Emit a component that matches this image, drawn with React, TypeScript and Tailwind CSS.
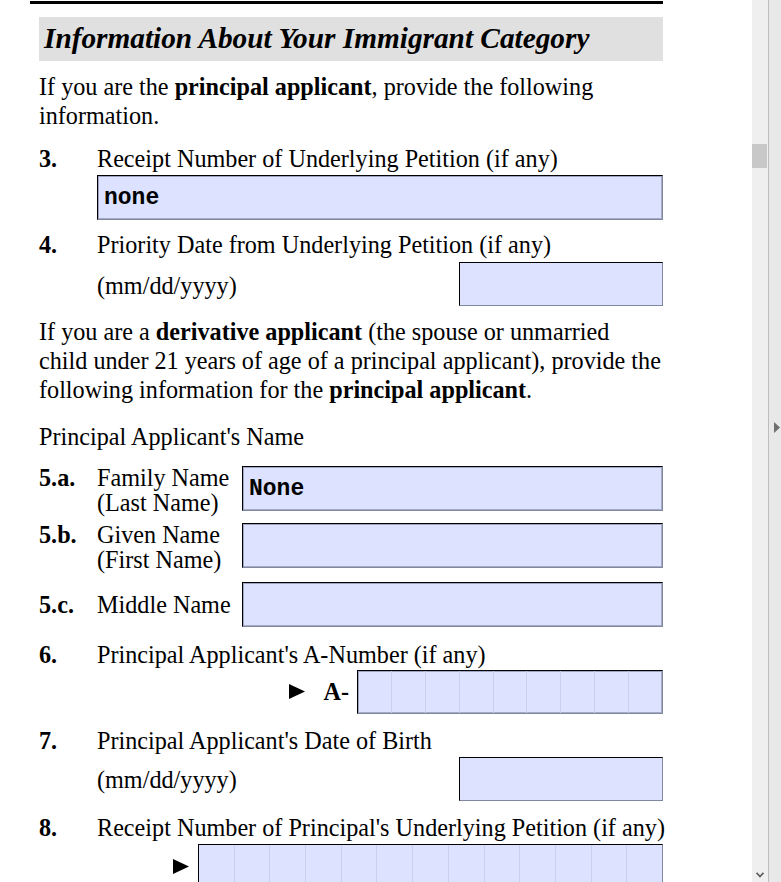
import type { ReactNode } from "react";

const serif = "font-['Liberation_Serif',serif]";
const mono = "font-['Liberation_Mono',monospace]";

// PDF-style text field: bevelled ("inset") or flat, optionally split into comb cells
function Field({
  className = "",
  value,
  inset = false,
  cells = 0,
}: {
  className?: string;
  value?: string;
  inset?: boolean;
  cells?: number;
}) {
  return (
    <div
      className={`flex items-center border border-t-black border-l-black border-r-[#8088a0] border-b-[#8088a0] bg-[#dce2ff] ${
        inset ? "shadow-[inset_1px_1px_0_#9ea4c2,inset_-1px_-1px_0_#a6abc4]" : ""
      } ${className}`}
    >
      {cells > 0 ? (
        <div className="flex h-full w-full">
          {Array.from({ length: cells }).map((_, i) => (
            <div key={i} className={`flex-1 ${i > 0 ? "border-l border-[#c9cfec]" : ""}`} />
          ))}
        </div>
      ) : (
        value && <span className={`${mono} pl-[6px] pt-[2px] text-[23px] font-bold leading-none text-black`}>{value}</span>
      )}
    </div>
  );
}

function Arrow({ className = "" }: { className?: string }) {
  return (
    <svg width="16" height="15" viewBox="0 0 16 15" className={className}>
      <polygon points="0,0 16,7.5 0,15" fill="#000" />
    </svg>
  );
}

function Item({ num, children, className = "" }: { num: string; children: ReactNode; className?: string }) {
  return (
    <div className={`flex leading-[29px] ${className}`}>
      <span className="w-[58px] shrink-0 font-bold">{num}</span>
      <span className="whitespace-nowrap">{children}</span>
    </div>
  );
}

function NameRow({ num, lines, value, className = "" }: { num: string; lines: string[]; value?: string; className?: string }) {
  const single = lines.length === 1;
  return (
    <div className={`flex ${single ? "items-center" : "items-start"} ${className}`}>
      <div className={`flex ${single ? "leading-[29px]" : "leading-[25px] -mt-[1px]"}`}>
        <span className="w-[58px] shrink-0 font-bold">{num}</span>
        <div className="w-[145px] whitespace-nowrap">
          {lines.map((l) => (
            <div key={l}>{l}</div>
          ))}
        </div>
      </div>
      <Field className="h-[45px] flex-1" value={value} inset />
    </div>
  );
}

export default function App() {
  return (
    <div className="flex h-[882px] w-[781px] overflow-hidden bg-white">
      <main className={`w-[752px] shrink-0 ${serif} text-[24.2px] text-black`}>
        <div className="ml-[30px] mt-[1px] h-[3px] w-[633px] bg-black" />

        <div className="ml-[39px] w-[624px]">
          <h1 className="mt-[13px] flex h-[44px] items-center whitespace-nowrap bg-[#e0e0e0] pl-[5px] text-[29.3px] font-bold italic">
            Information About Your Immigrant Category
          </h1>

          <p className="mt-[11px] whitespace-nowrap leading-[29px]">
            If you are the <b>principal applicant</b>, provide the following
            <br />
            information.
          </p>

          <Item num="3." className="mt-[14px]">
            Receipt Number of Underlying Petition (if any)
          </Item>
          <div className="ml-[58px] mt-[2px]">
            <Field className="h-[45px]" value="none" inset />
          </div>

          <Item num="4." className="mt-[10px]">
            Priority Date from Underlying Petition (if any)
          </Item>
          <div className="ml-[58px] mt-[3px] flex items-center justify-between">
            <span className="mt-[3px] leading-[29px]">(mm/dd/yyyy)</span>
            <Field className="h-[44px] w-[204px]" />
          </div>

          <p className="mt-[11px] whitespace-nowrap leading-[29px]">
            If you are a <b>derivative applicant</b> (the spouse or unmarried
            <br />
            child under 21 years of age of a principal applicant), provide the
            <br />
            following information for the <b>principal applicant</b>.
          </p>

          <p className="mt-[18px] leading-[29px]">Principal Applicant's Name</p>

          <NameRow num="5.a." lines={["Family Name", "(Last Name)"]} value="None" className="mt-[15px]" />
          <NameRow num="5.b." lines={["Given Name", "(First Name)"]} className="mt-[8px]" />
          <NameRow num="5.c." lines={["Middle Name"]} className="mt-[10px]" />

          <Item num="6." className="mt-[13px]">
            Principal Applicant's A-Number (if any)
          </Item>
          <div className="mt-[1px] flex items-center justify-end">
            <Arrow className="mr-[18px] -mt-[2px]" />
            <span className="mr-[8px] font-bold">A-</span>
            <Field className="h-[44px] w-[306px]" cells={9} inset />
          </div>

          <Item num="7." className="mt-[12px]">
            Principal Applicant's Date of Birth
          </Item>
          <div className="ml-[58px] mt-[2px] flex items-center justify-between">
            <span className="mt-[1px] leading-[29px]">(mm/dd/yyyy)</span>
            <Field className="h-[44px] w-[204px]" />
          </div>

          <Item num="8." className="mt-[12px]">
            Receipt Number of Principal's Underlying Petition (if any)
          </Item>
          <div className="mt-[2px] flex items-center justify-end">
            <Arrow className="mr-[9px]" />
            <Field className="h-[44px] w-[465px]" cells={13} />
          </div>
        </div>
      </main>

      {/* scrollbar */}
      <div className="relative w-[16px] shrink-0 bg-[#efefef]">
        <div className="absolute left-0 top-[144px] h-[24px] w-[15px] bg-[#c8c8c8]" />
        <svg width="8" height="6" viewBox="0 0 8 6" className="absolute bottom-[4px] left-[4px]">
          <polyline points="0.5,0.8 4,4.5 7.5,0.8" fill="none" stroke="#606060" strokeWidth="1.8" />
        </svg>
      </div>
      <div className="w-px shrink-0 bg-[#bdbdbd]" />

      {/* side panel handle */}
      <div className="flex flex-1 items-center bg-[#e8e8e8] pl-[5px]">
        <svg width="6" height="11" viewBox="0 0 6 11" className="-mt-[27px]">
          <polygon points="0,0 6,5.5 0,11" fill="#6e6e6e" />
        </svg>
      </div>
    </div>
  );
}
